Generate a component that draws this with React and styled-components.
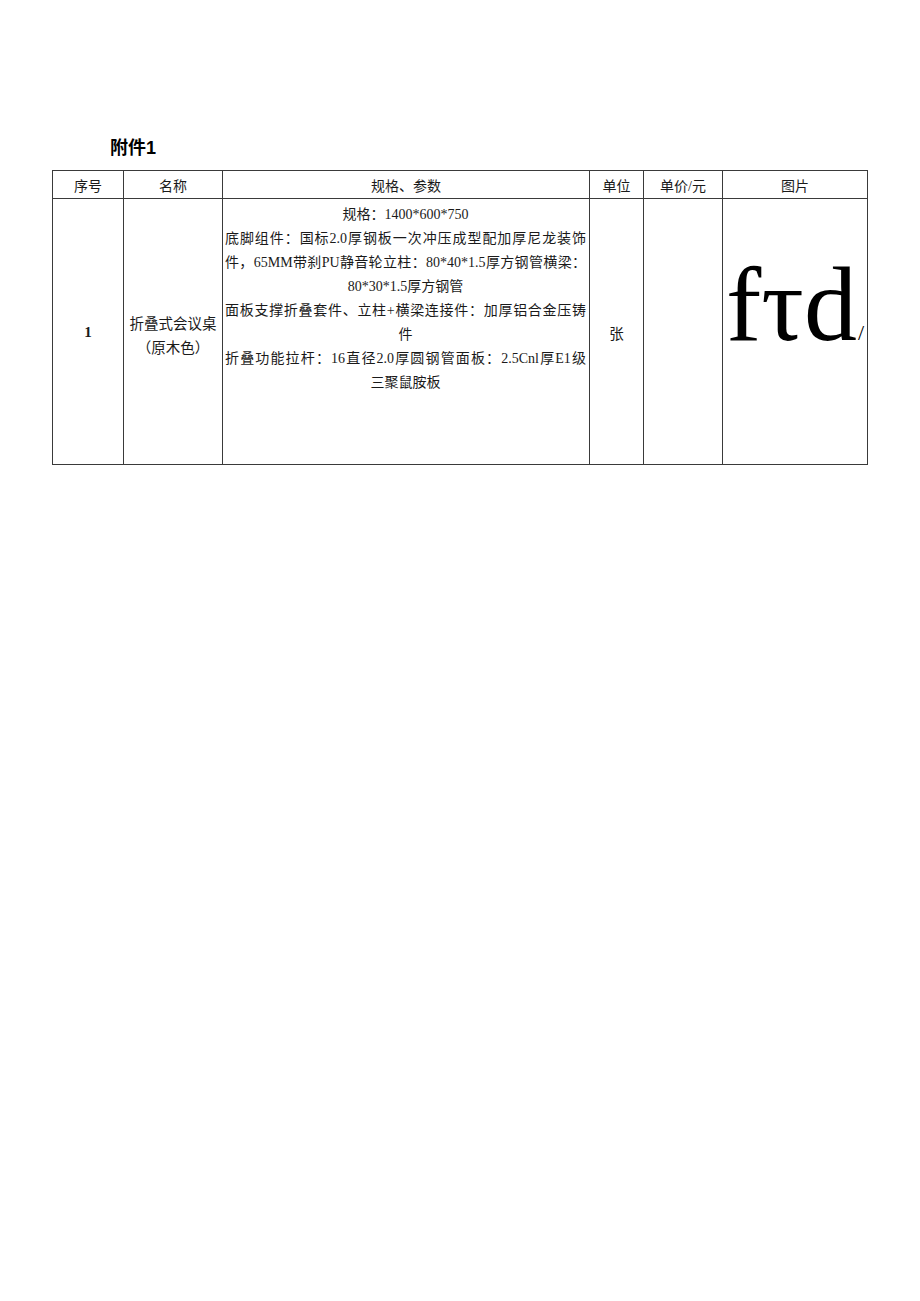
import React from "react";
import styled, { createGlobalStyle } from "styled-components";

const Global = createGlobalStyle`
  html, body { margin: 0; padding: 0; background: #fff; }
  body { font-family: "Liberation Serif", "Noto Sans CJK SC", serif; color: #1a1a1a; }
`;

const Page = styled.div`
  width: 920px;
  min-height: 1301px;
  box-sizing: border-box;
  padding: 136px 0 0 52px;
`;

const Title = styled.h1`
  margin: 0 0 10px 58px;
  font-family: "Liberation Sans", "Noto Sans CJK SC", sans-serif;
  font-weight: 700;
  font-size: 18px;
  line-height: 24px;
  color: #000;
`;

const Table = styled.table`
  width: 815px;
  table-layout: fixed;
  border-collapse: collapse;
`;

const Col = styled.col`
  width: ${(p) => p.$w}px;
`;

const HeadRow = styled.tr`
  height: 28px;
`;

const BodyRow = styled.tr`
  height: 266px;
`;

const Th = styled.th`
  border: 1px solid #3a3a3a;
  padding: 5px 0 0;
  font-weight: 400;
  font-size: 14px;
  line-height: 20px;
  text-align: center;
  vertical-align: middle;
  color: #1a1a1a;
`;

const Td = styled.td`
  border: 1px solid #3a3a3a;
  padding: ${(p) => p.$pad || "0"};
  font-size: 14.5px;
  line-height: 24px;
  text-align: center;
  vertical-align: ${(p) => p.$valign || "middle"};
  color: #1a1a1a;
`;

const Num = styled.span`
  font-family: "Liberation Serif", serif;
  font-weight: 700;
  font-size: 15px;
`;

const SpecLine = styled.div`
  font-size: 14px;
  line-height: 24px;
  text-align: ${(p) => (p.$full ? "justify" : "center")};
  text-align-last: ${(p) => (p.$full ? "justify" : "center")};
  white-space: nowrap;
`;

const Pic = styled.div`
  font-family: "Liberation Serif", serif;
  font-size: 106px;
  line-height: 100px;
  color: #000;
  white-space: nowrap;
`;

const Slash = styled.span`
  font-size: 22px;
  margin-left: 1px;
`;

const specLines = [
  { t: "规格：1400*600*750" },
  { t: "底脚组件：国标2.0厚钢板一次冲压成型配加厚尼龙装饰", full: true },
  { t: "件，65MM带刹PU静音轮立柱：80*40*1.5厚方钢管横梁：", full: true },
  { t: "80*30*1.5厚方钢管" },
  { t: "面板支撑折叠套件、立柱+横梁连接件：加厚铝合金压铸", full: true },
  { t: "件" },
  { t: "折叠功能拉杆：16直径2.0厚圆钢管面板：2.5Cnl厚E1级", full: true },
  { t: "三聚鼠胺板" },
];

export default function App() {
  return (
    <>
      <Global />
      <Page>
        <Title>附件1</Title>
        <Table>
          <colgroup>
            <Col $w={71} />
            <Col $w={99} />
            <Col $w={367} />
            <Col $w={54} />
            <Col $w={79} />
            <Col $w={145} />
          </colgroup>
          <thead>
            <HeadRow>
              <Th>序号</Th>
              <Th>名称</Th>
              <Th>规格、参数</Th>
              <Th>单位</Th>
              <Th>单价/元</Th>
              <Th>图片</Th>
            </HeadRow>
          </thead>
          <tbody>
            <BodyRow>
              <Td>
                <Num>1</Num>
              </Td>
              <Td $pad="8px 0 0">
                折叠式会议桌
                <br />
                （原木色）
              </Td>
              <Td $valign="top" $pad="4px 3px 0 2px">
                {specLines.map((l, i) => (
                  <SpecLine key={i} $full={l.full}>
                    {l.t}
                  </SpecLine>
                ))}
              </Td>
              <Td $pad="4px 0 0">张</Td>
              <Td />
              <Td $valign="top" $pad="56px 0 0">
                <Pic>
                  fτd<Slash>/</Slash>
                </Pic>
              </Td>
            </BodyRow>
          </tbody>
        </Table>
      </Page>
    </>
  );
}
